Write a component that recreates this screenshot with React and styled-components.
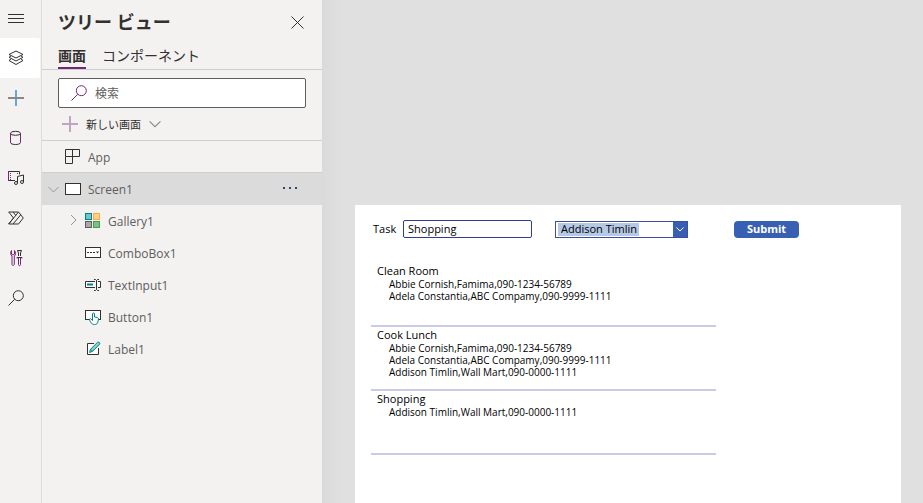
import React from "react";
import styled, { createGlobalStyle } from "styled-components";

const GlobalStyle = createGlobalStyle`
  * { box-sizing: border-box; }
  body {
    margin: 0;
    background: #e0e0e0;
    font-family: "Open Sans", "Noto Sans CJK JP", sans-serif;
  }
  button, input, select { font-family: inherit; }
  ul { list-style: none; margin: 0; padding: 0; }
`;

const Layout = styled.div`
  display: flex;
  min-height: 100vh;
`;

const Rail = styled.nav`
  flex: 0 0 42px;
  display: flex;
  flex-direction: column;
  background: #f3f2f1;
  border-right: 1px solid #dcdcdc;
`;

const RailButton = styled.button`
  width: 40px;
  height: ${(p) => (p.$short ? "38px" : "40px")};
  padding: 0 8px;
  border: none;
  border-radius: 0 2px 2px 0;
  background: ${(p) => (p.$active ? "#fff" : "transparent")};
  display: flex;
  align-items: center;
  cursor: pointer;
`;

const Svg = styled.svg`
  display: block;
  flex: none;
  fill: none;
  stroke: ${(p) => p.$color || "#323130"};
  stroke-width: 1;
`;

const Panel = styled.aside`
  flex: 0 0 280px;
  background: #f3f2f1;
  color: #323130;
`;

const PanelHeader = styled.div`
  display: flex;
  align-items: center;
  justify-content: space-between;
  height: 44px;
  padding: 0 16px;
`;

const PanelTitle = styled.h1`
  margin: 0;
  font-size: 18px;
  line-height: 24px;
  font-weight: 700;
`;

const IconButton = styled.button`
  display: flex;
  align-items: center;
  justify-content: center;
  width: 18px;
  height: 18px;
  padding: 0;
  border: none;
  background: none;
  cursor: pointer;
`;

const Tabs = styled.div`
  display: flex;
  gap: 16px;
  height: 26px;
  padding: 0 16px;
  border-bottom: 1px solid #cfcfcf;
`;

const Tab = styled.button`
  padding: 0;
  border: none;
  border-bottom: 2px solid ${(p) => (p.$active ? "#742774" : "transparent")};
  background: none;
  color: #323130;
  font-size: 14px;
  line-height: 22px;
  font-weight: ${(p) => (p.$active ? 700 : 400)};
  cursor: pointer;
`;

const SearchBox = styled.label`
  display: flex;
  align-items: center;
  gap: 8px;
  height: 30px;
  margin: 8px 16px 0;
  padding: 0 12px;
  background: #fff;
  border: 1px solid #605e5c;
  border-radius: 2px;
`;

const SearchInput = styled.input`
  flex: 1;
  min-width: 0;
  padding: 0;
  border: none;
  outline: none;
  background: none;
  font-size: 12px;
  &::placeholder { color: #605e5c; opacity: 1; }
`;

const NewScreen = styled.button`
  display: flex;
  align-items: center;
  gap: 8px;
  width: 100%;
  height: 32px;
  padding: 0 20px;
  border: none;
  background: none;
  color: #323130;
  font-size: 11px;
  cursor: pointer;
`;

const Tree = styled.ul`
  && { border-top: 1px solid #cfcfcf; }
`;

const TreeRow = styled.div`
  display: flex;
  align-items: center;
  height: ${(p) => (p.$selected ? "33px" : "32px")};
  margin-top: ${(p) => (p.$selected ? "-1px" : "0")};
  padding-right: 23px;
  padding-left: ${(p) => (p.$child ? "20px" : "0")};
  background: ${(p) => (p.$selected ? "#dbdbdb" : "transparent")};
  border-top: ${(p) => (p.$selected ? "1px solid #cfcfcf" : "none")};
`;

const Toggle = styled.span`
  flex: 0 0 23px;
  display: flex;
  justify-content: center;
`;

const TreeItem = styled.button`
  flex: 1;
  display: flex;
  align-items: center;
  gap: 7px;
  padding: 0;
  border: none;
  background: none;
  color: #605e5c;
  font-size: 12px;
  line-height: 16px;
  cursor: pointer;
`;

const TreeLabel = styled.span`
  padding-top: 1px;
`;

const Workspace = styled.main`
  flex: 1;
  min-width: 0;
  display: flex;
  padding: 205px 22px 0 33px;
  background: linear-gradient(to right, #dadada, #e0e0e0 20px);
`;

const Screen = styled.section`
  flex: 1;
  padding: 15px 16px 0;
  background: #fff;
  color: #000;
`;

const Form = styled.form`
  display: flex;
  align-items: center;
  height: 18px;
  padding-left: 2px;
  font-size: 11px;
`;

const TaskLabel = styled.label`
  width: 30px;
  padding-bottom: 2px;
`;

const TaskInput = styled.input`
  width: 129px;
  height: 18px;
  padding: 0 4px 2px;
  border: 1px solid #2f3f8f;
  border-radius: 2px;
  font-size: 11px;
  color: #000;
`;

const Combo = styled.div`
  display: flex;
  align-items: center;
  justify-content: space-between;
  width: 133px;
  height: 17px;
  margin-left: 23px;
  padding-left: 2px;
  border: 1px solid #3a4fa0;
`;

const ComboSelect = styled.select`
  appearance: none;
  field-sizing: content;
  height: 13px;
  padding: 0 2px 2px 3px;
  border: none;
  border-radius: 0;
  background: #b5c9e6;
  color: #000;
  font-size: 11px;
  line-height: 11px;
`;

const ComboArrow = styled.span`
  display: flex;
  align-items: center;
  justify-content: center;
  width: 14px;
  height: 15px;
  background: #3860b2;
`;

const Submit = styled.button`
  width: 65px;
  height: 17px;
  margin-left: 46px;
  padding: 0 0 2px;
  border: none;
  border-radius: 4px;
  background: #3860b2;
  color: #fff;
  font-size: 11px;
  line-height: 15px;
  font-weight: 700;
  cursor: pointer;
`;

const Gallery = styled.ul`
  max-width: 345px;
  && { margin-top: 25px; }
`;

const GalleryItem = styled.li`
  height: 64px;
  padding: 0 6px;
  border-bottom: 2px solid #cbcce2;
`;

const TaskName = styled.h2`
  margin: 0;
  font-size: 11px;
  line-height: 15px;
  font-weight: 500;
`;

const Person = styled.li`
  padding-left: 12px;
  font-size: 10px;
  line-height: 12px;
`;

const HamburgerIcon = () => (
  <Svg width="16" height="16">
    <path d="M0 3.5H16M0 7.5H16M0 11.5H16" />
  </Svg>
);

const LayersIcon = () => (
  <Svg width="16" height="16">
    <path d="M8 1L15 4.5L8 8L1 4.5Z" />
    <path d="M3 6L1 7.3L8 11L15 7.3L13 6M3 9L1 10.5L8 14.5L15 10.5L13 9" />
  </Svg>
);

const AddIcon = () => (
  <Svg width="16" height="16">
    <path d="M8 0V16" stroke="#62a8e0" strokeWidth="2" />
    <path d="M0 8H16" stroke="#8a8886" strokeWidth="2" />
  </Svg>
);

const DataIcon = () => (
  <Svg width="16" height="16">
    <path d="M2.5 3.5V12.5C2.5 15.2 12.5 15.2 12.5 12.5" />
    <path d="M2.5 3.5V12.5M12.5 3.5V12.5" stroke="#742774" />
    <ellipse cx="7.5" cy="3.3" rx="5" ry="2" />
  </Svg>
);

const MediaIcon = () => (
  <Svg width="17" height="16">
    <path d="M7 10.5H.5V1.5H11.5V4.5" />
    <path d="M.5 1.5V10.5" stroke="#742774" />
    <path d="M2.5 3V10M9.5 3V5" stroke="#742774" strokeDasharray="1 1" />
    <path d="M9.5 13V6.5L15.5 5V12" />
    <circle cx="8" cy="13" r="1.5" />
    <circle cx="14" cy="12" r="1.5" />
  </Svg>
);

const FlowIcon = () => (
  <Svg width="16" height="16">
    <path d="M.7 2H10.5L15.3 8L10.5 14H.7L5.5 8Z" />
    <path d="M5 2L7.8 5.4M.7 14L10.5 2M5 14L12.8 4.7" />
  </Svg>
);

const ToolsIcon = () => (
  <Svg width="16" height="18">
    <path d="M3.5 1.5V5L5 6L6.5 5V1.5M3.5 1.5C2 3.5 2.5 6 4 7V15C4 17 6.3 17 6.3 15V7C8 6 8 3.5 6.5 1.5" stroke="#742774" />
    <path d="M10.5 7V4L9.5 1.5H13.5L12.5 4V7M9 9.5V8.5H14V9.5" />
    <path d="M10.5 9V15.5C10.5 17 12.5 17 12.5 15.5V9" stroke="#742774" />
  </Svg>
);

const SearchIcon = ({ color }) => (
  <Svg width="16" height="16" $color={color}>
    <circle cx="10.3" cy="5.7" r="5" />
    <path d="M6.7 9.3L.5 15.5" />
  </Svg>
);

const CloseIcon = () => (
  <Svg width="13" height="13">
    <path d="M.5 .5L12.5 12.5M12.5 .5L.5 12.5" />
  </Svg>
);

const ChevronDown = ({ color, size = 11 }) => (
  <Svg width={size} height={size} viewBox="0 0 11 11" $color={color}>
    <path d="M.5 3L5.5 8L10.5 3" />
  </Svg>
);

const ChevronRight = () => (
  <Svg width="8" height="12" $color="#979593">
    <path d="M1 0L6 5L1 10" />
  </Svg>
);

const AppIcon = () => (
  <Svg width="16" height="16">
    <path d="M.5 .5H14.5V7.5H.5ZM.5 7.5V14.5H7.5V.5" />
  </Svg>
);

const ScreenIcon = () => (
  <Svg width="16" height="16">
    <rect x=".5" y="2.5" width="15" height="11" fill="#fff" />
  </Svg>
);

const GalleryIcon = () => (
  <Svg width="16" height="16">
    <rect x=".5" y=".5" width="6" height="6" fill="#69c9cb" stroke="#038387" />
    <rect x="8.5" y=".5" width="6" height="6" fill="#ffd08a" stroke="#ffaa44" />
    <rect x=".5" y="8.5" width="6" height="6" fill="#a9a9a9" stroke="#605e5c" />
    <rect x="8.5" y="8.5" width="6" height="6" fill="#81be85" stroke="#43a047" />
  </Svg>
);

const ComboIcon = () => (
  <Svg width="16" height="16">
    <rect x=".5" y="2.5" width="15" height="10" fill="#fff" />
    <path d="M2 7.5H10" strokeDasharray="2 1" />
    <path d="M11 6.5H14L12.5 8.5Z" fill="#323130" stroke="none" />
  </Svg>
);

const TextInputIcon = () => (
  <Svg width="16" height="16">
    <path d="M10 4.5H.5V10.5H10M13 4.5H15.5V10.5H13" fill="#fff" />
    <path d="M2 7.5H8" stroke="#038387" strokeWidth="2" />
    <path d="M9 2.5H10.5L11.5 3.5L12.5 2.5H14M9 13.5H10.5L11.5 12.5L12.5 13.5H14M11.5 3.5V12.5" />
  </Svg>
);

const ButtonIcon = () => (
  <Svg width="16" height="16">
    <rect x=".5" y="1.5" width="15" height="9" fill="#fff" />
    <path
      d="M7.5 10V5C7.5 3.6 9.5 3.6 9.5 5V8L12.2 8.5C13.2 8.7 13.5 9 13.4 10L13 12.5C12.6 14.6 11.5 15.5 9.5 15.5C7.5 15.5 6.5 14.5 5.5 12.8L4.5 11C4.2 9.6 5.7 9.3 6.3 10.2L7.5 11.5Z"
      fill="#fff"
      stroke="#038387"
    />
  </Svg>
);

const LabelIcon = () => (
  <Svg width="16" height="16">
    <path d="M9 2.5H2.5V13.5H13.5V7" fill="#fff" />
    <path d="M4.5 11.5L5.5 8.3L12.5 1.3C13.7 .4 15.5 2 14.6 3.2L7.6 10.3ZM5.5 8.3L7.6 10.3" fill="#8fd0ce" stroke="#038387" />
  </Svg>
);

const railItems = [
  { label: "メニュー", Icon: HamburgerIcon, short: true },
  { label: "ツリー ビュー", Icon: LayersIcon, active: true },
  { label: "挿入", Icon: AddIcon },
  { label: "データ", Icon: DataIcon },
  { label: "メディア", Icon: MediaIcon },
  { label: "Power Automate", Icon: FlowIcon },
  { label: "詳細ツール", Icon: ToolsIcon },
  { label: "検索", Icon: SearchIcon },
];

const controls = [
  { name: "Gallery1", Icon: GalleryIcon, expandable: true },
  { name: "ComboBox1", Icon: ComboIcon },
  { name: "TextInput1", Icon: TextInputIcon },
  { name: "Button1", Icon: ButtonIcon },
  { name: "Label1", Icon: LabelIcon },
];

const abbie = "Abbie Cornish,Famima,090-1234-56789";
const adela = "Adela Constantia,ABC Compamy,090-9999-1111";
const addison = "Addison Timlin,Wall Mart,090-0000-1111";

const tasks = [
  { name: "Clean Room", people: [abbie, adela] },
  { name: "Cook Lunch", people: [abbie, adela, addison] },
  { name: "Shopping", people: [addison] },
];

function TreePanel() {
  return (
    <Panel>
      <PanelHeader>
        <PanelTitle>ツリー ビュー</PanelTitle>
        <IconButton aria-label="閉じる"><CloseIcon /></IconButton>
      </PanelHeader>
      <Tabs role="tablist">
        <Tab role="tab" aria-selected="true" $active>画面</Tab>
        <Tab role="tab" aria-selected="false">コンポーネント</Tab>
      </Tabs>
      <SearchBox>
        <SearchIcon color="#742774" />
        <SearchInput type="search" placeholder="検索" aria-label="検索" />
      </SearchBox>
      <NewScreen>
        <Svg width="16" height="16">
          <path d="M0 8H16M8 0V16" stroke="#c3a3c3" strokeWidth="2" />
        </Svg>
        新しい画面
        <ChevronDown color="#8a8886" size={12} />
      </NewScreen>
      <Tree>
        <li>
          <TreeRow>
            <Toggle />
            <TreeItem><AppIcon /><TreeLabel>App</TreeLabel></TreeItem>
          </TreeRow>
        </li>
        <li>
          <TreeRow $selected>
            <Toggle><ChevronDown color="#979593" /></Toggle>
            <TreeItem><ScreenIcon /><TreeLabel>Screen1</TreeLabel></TreeItem>
            <IconButton aria-label="その他">
              <Svg width="16" height="4">
                <path d="M1 1H3M7 1H9M13 1H15" stroke="#2b4a6f" strokeWidth="2" />
              </Svg>
            </IconButton>
          </TreeRow>
          <ul>
            {controls.map(({ name, Icon, expandable }) => (
              <li key={name}>
                <TreeRow $child>
                  <Toggle>{expandable && <ChevronRight />}</Toggle>
                  <TreeItem><Icon /><TreeLabel>{name}</TreeLabel></TreeItem>
                </TreeRow>
              </li>
            ))}
          </ul>
        </li>
      </Tree>
    </Panel>
  );
}

export default function App() {
  return (
    <>
      <GlobalStyle />
      <Layout>
        <Rail>
          {railItems.map(({ label, Icon, active, short }) => (
            <RailButton key={label} aria-label={label} $active={active} $short={short}>
              <Icon />
            </RailButton>
          ))}
        </Rail>
        <TreePanel />
        <Workspace>
          <Screen>
            <Form onSubmit={(e) => e.preventDefault()}>
              <TaskLabel htmlFor="task">Task</TaskLabel>
              <TaskInput id="task" defaultValue="Shopping" />
              <Combo>
                <ComboSelect aria-label="Person" defaultValue="Addison Timlin">
                  <option>Abbie Cornish</option>
                  <option>Adela Constantia</option>
                  <option>Addison Timlin</option>
                </ComboSelect>
                <ComboArrow>
                  <Svg width="8" height="5" $color="#fff">
                    <path d="M.5 .5L4 4L7.5 .5" />
                  </Svg>
                </ComboArrow>
              </Combo>
              <Submit type="submit">Submit</Submit>
            </Form>
            <Gallery>
              {tasks.map((task) => (
                <GalleryItem key={task.name}>
                  <TaskName>{task.name}</TaskName>
                  <ul>
                    {task.people.map((person) => (
                      <Person key={person}>{person}</Person>
                    ))}
                  </ul>
                </GalleryItem>
              ))}
            </Gallery>
          </Screen>
        </Workspace>
      </Layout>
    </>
  );
}
